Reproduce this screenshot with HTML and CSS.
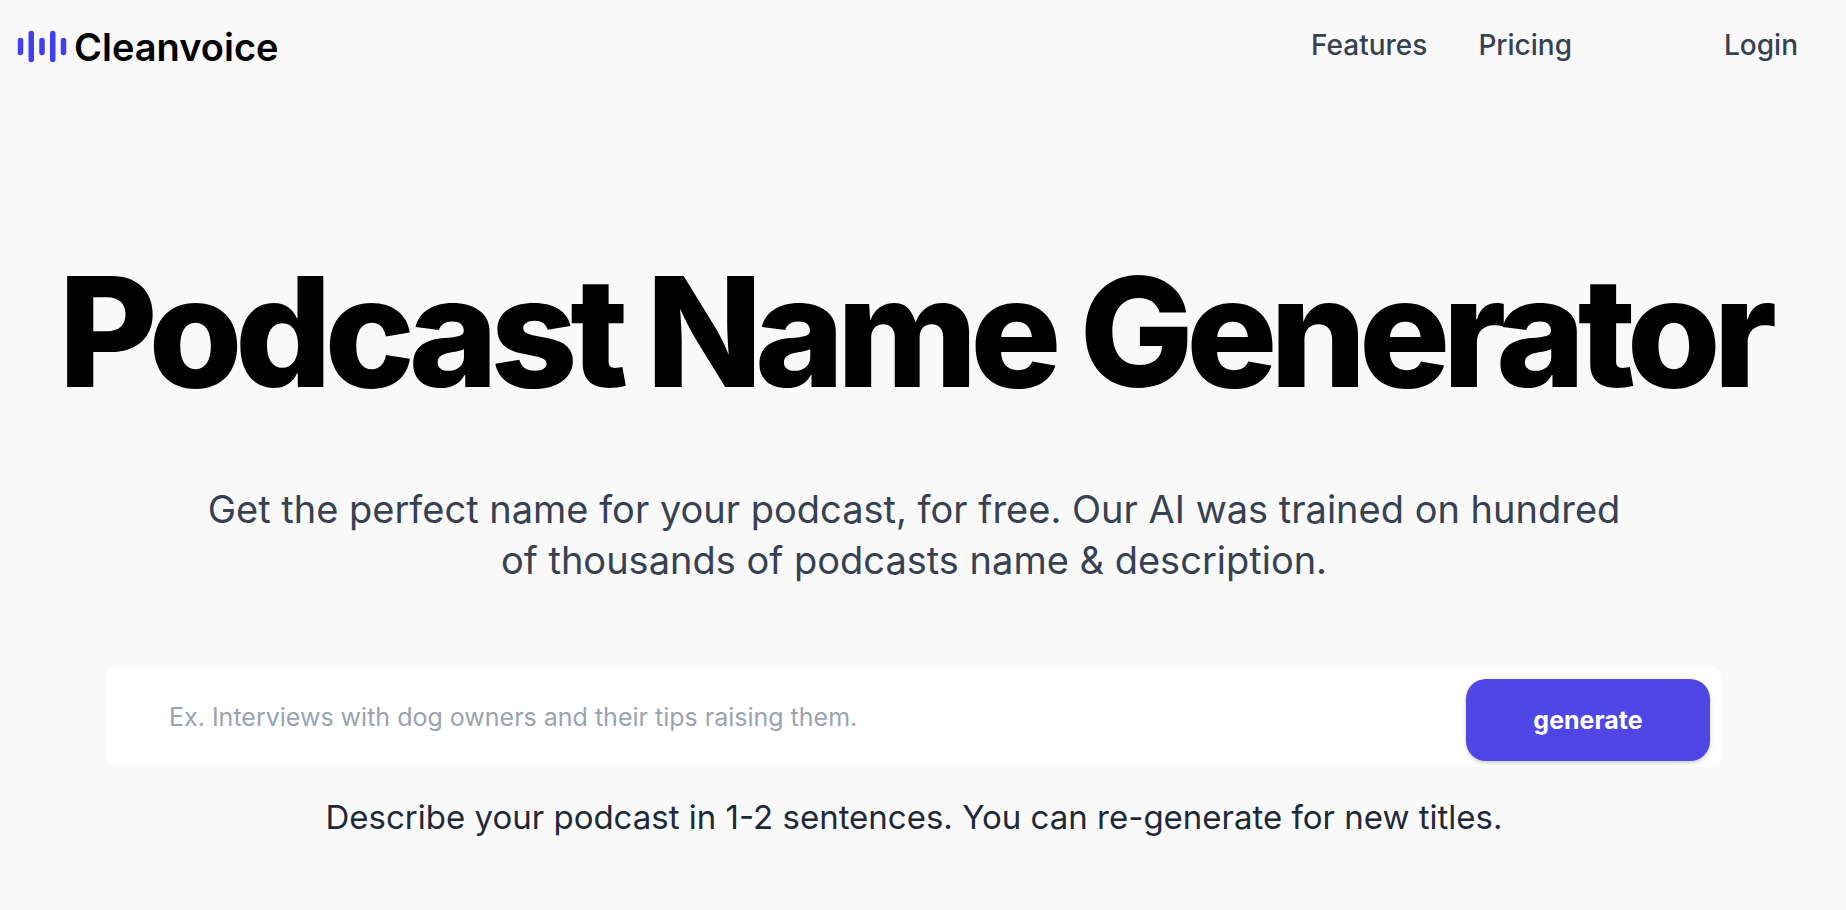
FILE: index.html
```html
<!DOCTYPE html>
<html lang="en">
<head>
<meta charset="utf-8">
<title>Podcast Name Generator – Cleanvoice</title>
<link rel="stylesheet" href="styles.css">
</head>
<body>
<header class="header">
  <a class="brand" href="#">
    <svg class="brand-mark" viewBox="0 0 50 34" aria-hidden="true">
      <g stroke="#4040f2" stroke-width="5.500" stroke-linecap="round">
        <path d="M3.500 10.500V22.500M14.250 3.500V29.500M25 10.500V22.500M35.750 3.500V29.500M46.500 10.500V22.500"/>
      </g>
    </svg>
    <span class="brand-name">Cleanvoice</span>
  </a>
  <nav class="nav">
    <a class="nav-link" href="#">Features</a>
    <a class="nav-link" href="#">Pricing</a>
    <a class="nav-link nav-login" href="#">Login</a>
  </nav>
</header>
<main class="hero">
  <h1 class="title">Podcast Name Generator</h1>
  <p class="lead">Get the perfect name for your podcast, for free. Our AI was trained on hundred of thousands of podcasts name &amp; description.</p>
  <form class="form">
    <input class="field" id="topic" type="text" aria-describedby="hint" aria-label="Podcast description" placeholder="Ex. Interviews with dog owners and their tips raising them.">
    <button class="submit" type="button">generate</button>
  </form>
  <p class="hint" id="hint">Describe your podcast in 1-2 sentences. You can re-generate for new titles.</p>
</main>
</body>
</html>
```
FILE: styles.css
```css
* { box-sizing: border-box; }
body { margin: 0; background: #f9f9f9; font-family: Inter, "Liberation Sans", sans-serif; color: #374151; }
a { color: inherit; text-decoration: none; }
.header { display: flex; align-items: flex-start; justify-content: space-between; height: 92px; padding: 24px 48px 0 17px; }
.brand { display: flex; align-items: center; gap: 7px; color: #000; }
.brand-mark { width: 50px; height: 34px; fill: none; }
.brand-name { font-size: 38px; line-height: 46px; font-weight: 600; }
.nav { display: flex; gap: 51px; font-size: 28px; line-height: 42px; font-weight: 500; }
.nav-login { margin-left: 101px; }
.hero { display: flex; flex-direction: column; align-items: center; padding: 160px 18px 0 0; text-align: center; }
.title { margin: 0; font-size: 152px; line-height: 160px; font-weight: 800; letter-spacing: -0.05em; color: #000; white-space: nowrap; }
.lead { margin: 72px 0 0; max-width: 1440px; font-size: 38px; line-height: 51px; }
.form { display: flex; align-items: flex-start; width: 1616px; max-width: 90%; margin: 80px 0 0; padding: 13px 12px 6px 0; border-radius: 12px; background: #fff; }
.field { flex: 1; min-width: 0; height: 76px; padding: 0 63px; border: 0; background: none; font: inherit; font-size: 25px; color: #1f2937; outline: 0; }
.field::placeholder { color: #9ca3af; opacity: 1; }
.submit { width: 244px; height: 82px; border: 0; border-radius: 20px; background: #4f46e5; color: #fff; font: inherit; font-size: 25px; font-weight: 700; box-shadow: 0 2px 4px #0003; }
.hint { margin: 26px 0 0; font-size: 33px; line-height: 48px; color: #1f2937; }
```
